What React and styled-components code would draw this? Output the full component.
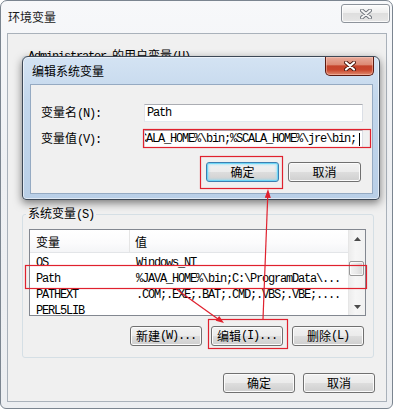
import React from 'react'
import styled, { createGlobalStyle } from 'styled-components'

const GlobalStyle = createGlobalStyle`
  html, body {
    margin: 0;
    padding: 0;
    background: #fff;
  }
  body {
    font-family: "Liberation Mono", "Noto Sans CJK SC", monospace;
    font-size: 12px;
    letter-spacing: -1.2px;
    color: #000;
  }
`

const RED = '#e0212e'

const Screen = styled.div`
  position: relative;
  width: 396px;
  height: 411px;
  overflow: hidden;
  background: #fff;
`

// CJK text keeps full width glyphs, ascii stays on the 6px grid
const Zh = styled.span`
  font-family: "Noto Sans CJK SC", sans-serif;
  letter-spacing: 0;
`

const Window = styled.div`
  width: 393px;
  height: 409px;
  box-sizing: border-box;
  border: 1px solid #7b8590;
  border-radius: 7px 7px 6px 6px;
  background: linear-gradient(#f7f8fa, #eef0f3 40%, #eceef1);
  display: flex;
  flex-direction: column;
`

const TitleBar = styled.div`
  height: 32px;
  flex: none;
  display: flex;
  align-items: center;
  padding-left: 7px;
`

const Title = styled(Zh)`
  flex: 1;
  font-size: 12px;
  line-height: 14px;
  color: #1a1a1a;
`

const CloseButton = styled.div`
  align-self: flex-start;
  margin: 3px 2px 0 0;
  width: 49px;
  height: 19px;
  box-sizing: border-box;
  border: 1px solid #8d939b;
  border-radius: 3px;
  background: linear-gradient(#fcfcfc, #eeeeee 45%, #dedede 50%, #e6e6e6);
  box-shadow: inset 0 0 0 1px rgba(255, 255, 255, 0.8);
  display: flex;
  align-items: center;
  justify-content: center;
`

const RedClose = styled.div`
  align-self: flex-start;
  margin-right: -1px;
  width: 49px;
  height: 19px;
  box-sizing: border-box;
  border: 1px solid #5b1a10;
  border-top: none;
  border-radius: 0 0 5px 5px;
  background: linear-gradient(#e8ab9b, #dd8a74 42%, #c5442b 50%, #c9472d 72%, #e08b6f);
  box-shadow: inset 0 0 0 1px rgba(255, 210, 200, 0.45);
  display: flex;
  align-items: center;
  justify-content: center;
`

const Client = styled.div`
  flex: 1;
  margin: 0 5px 6px 6px;
  border: 1px solid #a9b1ba;
  background: #f0f0f0;
  display: flex;
  flex-direction: column;
  padding: 15px 12px 0 14px;
`

const Group = styled.fieldset`
  margin: ${p => p.$top || 0}px 0 0 0;
  height: ${p => (p.$height ? p.$height + 'px' : 'auto')};
  box-sizing: border-box;
  padding: 8px 7px 11px 6px;
  border: 1px solid #d5dfe5;
  border-radius: 3px;
  min-inline-size: 0;
`

const Legend = styled.legend`
  padding: 0 2px;
  margin-left: -3px;
  font-size: 12px;
  line-height: 12px;
  white-space: nowrap;
`

const ListView = styled.div`
  height: 87px;
  box-sizing: border-box;
  border: 1px solid #828790;
  background: #fff;
  display: flex;
  overflow: hidden;
`

const ListBody = styled.div`
  flex: 1;
  min-width: 0;
  display: flex;
  flex-direction: column;
`

const Header = styled.div`
  height: 23px;
  flex: none;
  box-sizing: border-box;
  border-bottom: 1px solid #e3e5e8;
  background: linear-gradient(#ffffff, #fbfbfc 60%, #f4f5f7);
  display: flex;
`

const HeadCell = styled.div`
  width: ${p => (p.$w ? p.$w + 'px' : 'auto')};
  flex: ${p => (p.$w ? 'none' : '1')};
  box-sizing: border-box;
  padding-left: ${p => (p.$w ? 6 : 5)}px;
  border-right: ${p => (p.$w ? '1px solid #e5e5e5' : 'none')};
  display: flex;
  align-items: center;
  font-size: 12px;
`

const Rows = styled.div`
  padding-top: 2px;
`

const Row = styled.div`
  height: 16px;
  display: flex;
  line-height: 16px;
`

const Cell = styled.div`
  width: ${p => (p.$w ? p.$w + 'px' : 'auto')};
  flex: ${p => (p.$w ? 'none' : '1')};
  min-width: 0;
  box-sizing: border-box;
  padding-left: 6px;
  white-space: nowrap;
  overflow: hidden;
`

const ScrollBar = styled.div`
  width: 17px;
  flex: none;
  border-left: 1px solid #e6e6e6;
  box-sizing: border-box;
  background: linear-gradient(to right, #ececec, #f6f6f6 40%, #f1f1f1);
  display: flex;
  flex-direction: column;
`

const ArrowButton = styled.div`
  height: 17px;
  flex: none;
  display: flex;
  align-items: center;
  justify-content: center;
`

const Track = styled.div`
  flex: 1;
  padding-top: 14px;
`

const Thumb = styled.div`
  height: 15px;
  margin: 0 1px 0 0;
  box-sizing: border-box;
  border: 1px solid #989898;
  border-radius: 2px;
  background: linear-gradient(to right, #f4f4f4, #e8e8e8 50%, #d6d6d6);
  box-shadow: inset 0 0 0 1px rgba(255, 255, 255, 0.7);
`

const ButtonRow = styled.div`
  display: flex;
  justify-content: flex-end;
  gap: ${p => p.$gap}px;
  margin-top: ${p => p.$top}px;
  margin-right: ${p => p.$right}px;
`

const Button = styled.div`
  width: ${p => p.$w || 72}px;
  height: 20px;
  box-sizing: border-box;
  border: 1px solid ${p => (p.$default ? '#3c7fb1' : '#707070')};
  border-radius: 3px;
  background: linear-gradient(#f2f2f2, #ebebeb 48%, #dddddd 52%, #cfcfcf);
  box-shadow: ${p =>
    p.$default
      ? 'inset 0 0 0 1px #6fd6f6, inset 0 0 2px 2px rgba(140, 220, 248, 0.55)'
      : 'inset 0 0 0 1px #fbfbfb'};
  display: flex;
  align-items: center;
  justify-content: center;
  white-space: nowrap;
  font-size: 12px;
  line-height: 14px;
`

const Dialog = styled.div`
  position: absolute;
  left: 22px;
  top: 56px;
  width: 358px;
  box-sizing: border-box;
  border: 1px solid #3d4856;
  border-radius: 6px 6px 4px 4px;
  background: linear-gradient(#d4e3f3, #c3d7ec 30%, #b9cfe7);
  box-shadow: 0 3px 9px rgba(0, 0, 0, 0.5), inset 0 0 0 1px rgba(255, 255, 255, 0.55);
  padding: 0 6px 5px 7px;
`

const DialogTitleBar = styled.div`
  height: 27px;
  display: flex;
  align-items: center;
  padding-left: 2px;
`

const DialogTitle = styled(Zh)`
  flex: 1;
  font-size: 12px;
  line-height: 14px;
`

const DialogClient = styled.div`
  border: 1px solid #95aac2;
  background: #f0f0f0;
  padding: 19px 9px 11px 10px;
`

const FormGrid = styled.div`
  display: grid;
  grid-template-columns: 103px 219px;
  grid-auto-rows: 18px;
  row-gap: 8px;
  align-items: center;
`

const FieldLabel = styled.div`
  font-size: 12px;
  line-height: 16px;
  white-space: nowrap;
`

const TextBox = styled.div`
  height: 18px;
  box-sizing: border-box;
  border: 1px solid;
  border-color: #abadb3 #dbdfe6 #e3e9ef #e2e3ea;
  background: #fff;
  padding: 0 2px;
  line-height: 16px;
  white-space: nowrap;
  overflow: hidden;
  display: flex;
  align-items: center;
  justify-content: ${p => (p.$scrolled ? 'flex-end' : 'flex-start')};
  span {
    flex: none;
  }
`

const Caret = styled.i`
  flex: none;
  width: 1px;
  height: 13px;
  margin-left: 3px;
  background: #000;
`

const Marks = styled.svg`
  position: absolute;
  left: 0;
  top: 0;
  pointer-events: none;
`

function CloseX ({ light }) {
  const d = 'M2 1.5 L10 8.5 M10 1.5 L2 8.5'
  return (
    <svg width='12' height='10' viewBox='0 0 12 10'>
      <path d={d} stroke={light ? '#6d737b' : '#4a160d'} strokeWidth='4' strokeLinecap='round' fill='none' />
      <path d={d} stroke={light ? '#f4f4f4' : '#fff'} strokeWidth='2.2' strokeLinecap='round' fill='none' />
    </svg>
  )
}

function Arrow ({ up }) {
  return (
    <svg width='7' height='4' viewBox='0 0 7 4'>
      <path d={up ? 'M0 4 L3.5 0 L7 4 Z' : 'M0 0 L7 0 L3.5 4 Z'} fill='#4b4b4b' />
    </svg>
  )
}

const rows = [
  { name: 'OS', value: 'Windows_NT' },
  { name: 'Path', value: '%JAVA_HOME%\\bin;C:\\ProgramData\\...' },
  { name: 'PATHEXT', value: '.COM;.EXE;.BAT;.CMD;.VBS;.VBE;....' },
  { name: 'PERL5LIB', value: '' }
]

const pathValue = '%JAVA_HOME%\\bin;C:\\ProgramData\\Oracle\\Java\\javapath;%SCALA_HOME%\\bin;%SCALA_HOME%\\jre\\bin;'

export default function App () {
  return (
    <Screen>
      <GlobalStyle />
      <Window>
        <TitleBar>
          <Title>环境变量</Title>
          <CloseButton><CloseX light /></CloseButton>
        </TitleBar>
        <Client>
          <Group $height={147}>
            <Legend>Administrator <Zh>的用户变量</Zh>(U)</Legend>
          </Group>

          <Group $top={11}>
            <Legend><Zh>系统变量</Zh>(S)</Legend>
            <ListView>
              <ListBody>
                <Header>
                  <HeadCell $w={100}><Zh>变量</Zh></HeadCell>
                  <HeadCell><Zh>值</Zh></HeadCell>
                </Header>
                <Rows>
                  {rows.map(r => (
                    <Row key={r.name}>
                      <Cell $w={100}>{r.name}</Cell>
                      <Cell>{r.value}</Cell>
                    </Row>
                  ))}
                </Rows>
              </ListBody>
              <ScrollBar>
                <ArrowButton><Arrow up /></ArrowButton>
                <Track><Thumb /></Track>
                <ArrowButton><Arrow /></ArrowButton>
              </ScrollBar>
            </ListView>
            <ButtonRow $top={10} $right={2} $gap={9}>
              <Button><Zh>新建</Zh>(W)...</Button>
              <Button><Zh>编辑</Zh>(I)...</Button>
              <Button><Zh>删除</Zh>(L)</Button>
            </ButtonRow>
          </Group>

          <ButtonRow $top={15} $right={-1} $gap={8}>
            <Button><Zh>确定</Zh></Button>
            <Button><Zh>取消</Zh></Button>
          </ButtonRow>
        </Client>
      </Window>

      <Dialog>
        <DialogTitleBar>
          <DialogTitle>编辑系统变量</DialogTitle>
          <RedClose><CloseX /></RedClose>
        </DialogTitleBar>
        <DialogClient>
          <FormGrid>
            <FieldLabel><Zh>变量名</Zh>(N):</FieldLabel>
            <TextBox>Path</TextBox>
            <FieldLabel><Zh>变量值</Zh>(V):</FieldLabel>
            <TextBox $scrolled><span>{pathValue}</span><Caret /></TextBox>
          </FormGrid>
          <ButtonRow $top={14} $right={2} $gap={9}>
            <Button $w={73} $default><Zh>确定</Zh></Button>
            <Button $w={73}><Zh>取消</Zh></Button>
          </ButtonRow>
        </DialogClient>
      </Dialog>

      {/* red annotation boxes and arrows */}
      <Marks width='396' height='411' viewBox='0 0 396 411'>
        <g fill='none' stroke={RED} strokeWidth='1.2'>
          <rect x='143.5' y='129.5' width='227' height='18' />
          <rect x='200.5' y='156.5' width='82' height='32' />
          <rect x='25.5' y='265.5' width='341' height='23' />
          <rect x='208.5' y='319.5' width='79' height='29' />
          <line x1='176' y1='289' x2='218' y2='319' />
          <line x1='263' y1='319' x2='267.7' y2='197' />
        </g>
        <g fill={RED}>
          <polygon points='224,323 215.7,320.8 219.2,315.9' />
          <polygon points='268,189 270.8,198 264.8,197.8' />
        </g>
      </Marks>
    </Screen>
  )
}
